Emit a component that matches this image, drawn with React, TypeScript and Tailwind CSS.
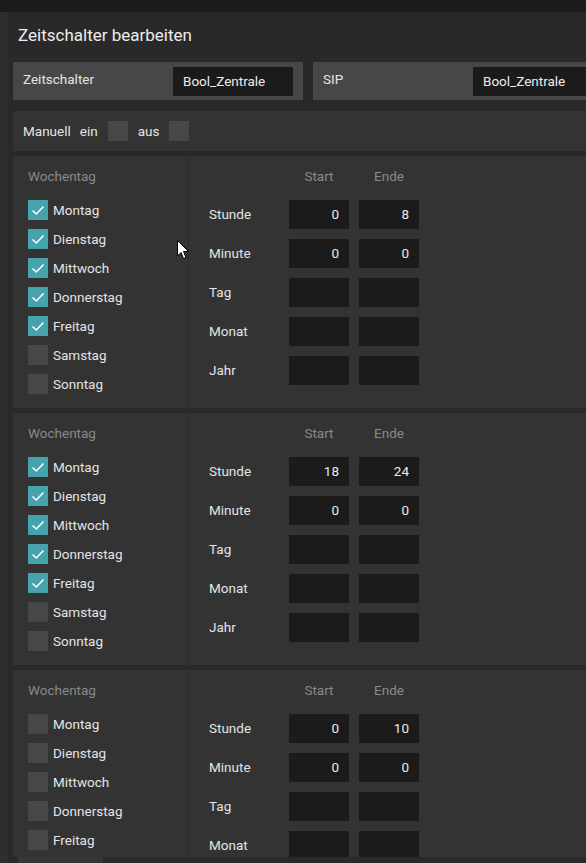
import React from "react";

const DAYS = ["Montag", "Dienstag", "Mittwoch", "Donnerstag", "Freitag", "Samstag", "Sonntag"];
const FIELDS = ["Stunde", "Minute", "Tag", "Monat", "Jahr"];

type Slot = {
  days: boolean[];
  start: string[];
  end: string[];
};

const slots: Slot[] = [
  {
    days: [true, true, true, true, true, false, false],
    start: ["0", "0", "", "", ""],
    end: ["8", "0", "", "", ""],
  },
  {
    days: [true, true, true, true, true, false, false],
    start: ["18", "0", "", "", ""],
    end: ["24", "0", "", "", ""],
  },
  {
    days: [false, false, false, false, false, false, false],
    start: ["0", "0", "", "", ""],
    end: ["10", "0", "", "", ""],
  },
];

function Check({ checked }: { checked?: boolean }) {
  return (
    <div
      className={
        "w-[20px] h-[20px] shrink-0 flex items-center justify-center " +
        (checked ? "bg-[#45a3ad]" : "bg-[#474747]")
      }
    >
      {checked && (
        <svg width="20" height="20" viewBox="0 0 20 20">
          <path d="M4.5 10.5 L8.3 14 L15.5 6.5" fill="none" stroke="#ffffff" strokeWidth="1.6" />
        </svg>
      )}
    </div>
  );
}

function Field({ value }: { value: string }) {
  return (
    <div className="w-[60px] h-[29px] bg-[#1b1b1b] text-right pr-[10px] leading-[29px] text-[#ececec]">
      {value}
    </div>
  );
}

function SlotCard({ slot }: { slot: Slot }) {
  return (
    <div className="flex shrink-0 bg-[#333333]">
      <div className="w-[176px] shrink-0 border-r border-[#2b2b2b] pl-[15px] pt-[11px] pb-[14px]">
        <div className="h-[18px] leading-[18px] text-[#8a8a8a]">Wochentag</div>
        <div className="mt-[15px] flex flex-col gap-[9px]">
          {DAYS.map((d, i) => (
            <div key={d} className="flex items-center h-[20px] gap-[5px]">
              <Check checked={slot.days[i]} />
              <span className="leading-[20px]">{d}</span>
            </div>
          ))}
        </div>
      </div>
      <div className="pl-[20px] pt-[11px]">
        <div className="flex h-[18px] leading-[18px] text-[#8a8a8a]">
          <div className="w-[80px]" />
          <div className="w-[60px] text-center">Start</div>
          <div className="w-[60px] ml-[10px] text-center">Ende</div>
        </div>
        <div className="mt-[15px] flex flex-col gap-[10px]">
          {FIELDS.map((f, i) => (
            <div key={f} className="flex items-center h-[29px]">
              <div className="w-[80px]">{f}</div>
              <Field value={slot.start[i]} />
              <div className="ml-[10px]">
                <Field value={slot.end[i]} />
              </div>
            </div>
          ))}
        </div>
      </div>
    </div>
  );
}

function HeaderBox({ label, value }: { label: string; value: string }) {
  return (
    <div className="w-[290px] h-[38px] shrink-0 bg-[#474747] flex items-start pl-[10px]">
      <div className="w-[150px] mt-[8px] leading-[18px]">{label}</div>
      <div className="mt-[5px] w-[120px] h-[29px] bg-[#1b1b1b] pl-[10px] leading-[29px] text-[#ececec]">
        {value}
      </div>
    </div>
  );
}

export default function App() {
  return (
    <div
      className="w-[586px] h-[863px] overflow-hidden flex flex-col bg-[#292929] text-[13.5px] text-[#e4e4e4]"
      style={{ fontFamily: "Roboto, 'Noto Sans', sans-serif" }}
    >
      <div className="h-[12px] shrink-0 bg-[#1c1c1c]" />
      <div className="flex flex-1 min-h-0">
        <div className="w-[8px] shrink-0 bg-[#2e2e2e]" />
        <div className="flex-1 min-w-0 flex flex-col relative">
          <div className="flex-1 min-h-0 overflow-hidden pl-[5px] flex flex-col">
            <div className="h-[50px] shrink-0 pl-[5px] pt-[11px] text-[17px] leading-[24px] text-[#ececec]">
              Zeitschalter bearbeiten
            </div>
            <div className="flex gap-[10px] shrink-0">
              <HeaderBox label="Zeitschalter" value="Bool_Zentrale" />
              <HeaderBox label="SIP" value="Bool_Zentrale" />
            </div>
            <div className="mt-[11px] h-[40px] shrink-0 bg-[#333333] flex items-center pl-[10px]">
              <span>Manuell</span>
              <span className="ml-[9px]">ein</span>
              <div className="ml-[10px]">
                <Check />
              </div>
              <span className="ml-[10px]">aus</span>
              <div className="ml-[10px]">
                <Check />
              </div>
            </div>
            <div className="mt-[5px] flex flex-col gap-[5px]">
              {slots.map((s, i) => (
                <SlotCard key={i} slot={s} />
              ))}
            </div>
          </div>
          {/* horizontal scrollbar */}
          <div className="h-[6px] shrink-0 bg-[#2a2a2a]">
            <div className="ml-[10px] w-[85px] h-full bg-[#363636]" />
          </div>
          {/* mouse pointer */}
          <svg
            className="absolute left-[169px] top-[228px]"
            width="13"
            height="20"
            viewBox="0 0 13 20"
          >
            <path
              d="M0.5 0.5 L0.5 16 L4 12.5 L6.5 18.5 L9 17.5 L6.5 11.5 L11.5 11.5 Z"
              fill="#ffffff"
              stroke="#000000"
              strokeWidth="1"
            />
          </svg>
        </div>
      </div>
    </div>
  );
}
